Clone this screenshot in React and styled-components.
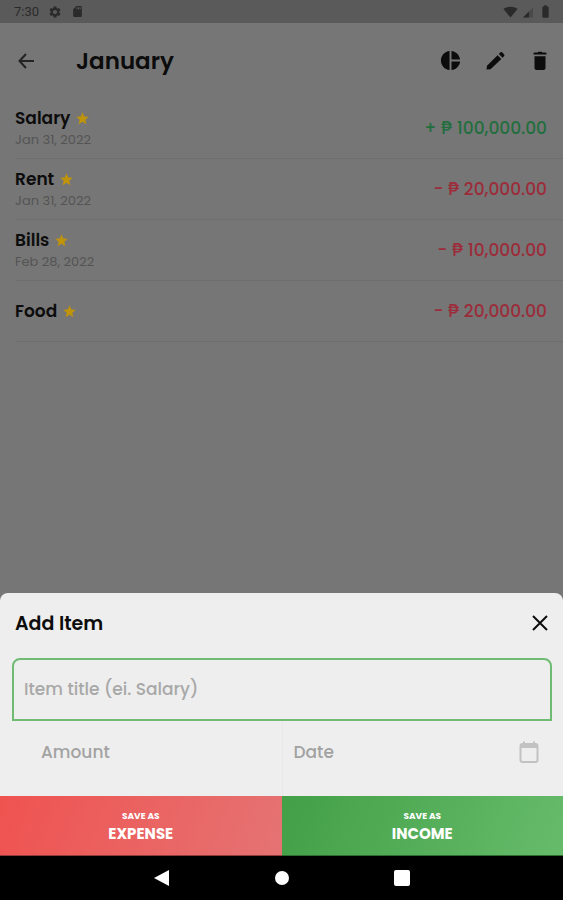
import React from "react";
import styled, { createGlobalStyle } from "styled-components";
import { MdBatteryFull, MdPieChart, MdSdCard, MdSettings, MdStar } from "react-icons/md";

const GlobalStyle = createGlobalStyle`
  * { box-sizing: border-box; }
  body { margin: 0; background: #767676; }
  button, input { font: inherit; color: inherit; }
`;

const Page = styled.div`
  display: flex;
  flex-direction: column;
  min-height: 100vh;
  background: #767676;
  color: #0c0c0c;
  font-family: Poppins, Inter, "Open Sans", sans-serif;
`;

const Screen = styled.main`
  flex: 1;
`;

const StatusBar = styled.div`
  display: flex;
  justify-content: space-between;
  height: 23px;
  padding: 0 10px 0 14px;
  background: #5a5a5a;
  color: #2a2a2a;
  font-family: Roboto, sans-serif;
  font-size: 13px;
`;

const StatusGroup = styled.div`
  display: flex;
  align-items: center;
  gap: ${(p) => p.$gap};
`;

const Header = styled.header`
  display: flex;
  align-items: center;
  gap: 36px;
  height: 75px;
  padding: 0 11px 0 12px;
`;

const Title = styled.h1`
  flex: 1;
  margin: 0;
  padding-left: 4px;
  font-size: 23px;
  font-weight: 600;
`;

const Actions = styled.div`
  display: flex;
  gap: 21px;
`;

const IconButton = styled.button`
  display: grid;
  place-items: center;
  width: 24px;
  height: 24px;
  padding: 0;
  border: 0;
  background: none;
  color: ${(p) => p.$color || "#0c0c0c"};
  cursor: pointer;
`;

const List = styled.ul`
  margin: 0;
  padding: 0 0 0 15px;
  list-style: none;
`;

const Row = styled.li`
  display: flex;
  align-items: center;
  justify-content: space-between;
  height: 61px;
  padding-right: 16px;
  border-bottom: 1px solid #6e6e6e;
`;

const Name = styled.div`
  display: flex;
  align-items: center;
  gap: 5px;
  font-size: 17px;
  line-height: 24px;
  font-weight: 600;
  color: #0c0c0c;

  svg { color: #bf930a; }
`;

const DateLine = styled.div`
  font-size: 13px;
  line-height: 20px;
  color: #545454;
`;

const Amount = styled.div`
  font-size: 17px;
  font-weight: 500;
  color: ${(p) => (p.$income ? "#226e3e" : "#9c2c3a")};
`;

const Sheet = styled.form`
  overflow: hidden;
  border-radius: 8px 8px 0 0;
  background: #eee;
`;

const SheetHeader = styled.div`
  display: flex;
  align-items: center;
  justify-content: space-between;
  height: 65px;
  padding: 0 11px 5px 15px;
`;

const SheetTitle = styled.h2`
  margin: 0;
  font-size: 19px;
  font-weight: 600;
`;

const TitleInput = styled.input`
  display: block;
  width: calc(100% - 23px);
  height: 63px;
  margin: 0 11px 0 12px;
  padding: 0 10px 2px;
  border: 2px solid #6fbb74;
  border-radius: 8px 8px 0 0;
  outline: 0;
  background: #eee;
  font-size: 17px;
  font-weight: 500;

  &::placeholder { color: #a8a8a8; opacity: 1; }
`;

const Halves = styled.div`
  display: grid;
  grid-template-columns: repeat(2, minmax(0, 1fr));
`;

const Field = styled.div`
  display: flex;
  align-items: center;
  height: 75px;
  padding: 0 22px 13px ${(p) => p.$indent};
  border-left: ${(p) => (p.$divided ? "1px solid #e8e8e8" : "0")};
`;

const FieldInput = styled.input`
  flex: 1;
  min-width: 0;
  padding: 0;
  border: 0;
  outline: 0;
  background: none;
  font-size: 17px;
  font-weight: 500;

  &::placeholder { color: #a2a2a2; opacity: 1; }
`;

const SaveButton = styled.button`
  display: flex;
  flex-direction: column;
  align-items: center;
  justify-content: center;
  height: 60px;
  padding: 0;
  border: 0;
  border-bottom: 1px solid ${(p) => (p.$income ? "#2d6e30" : "#913c3a")};
  background: ${(p) =>
    p.$income
      ? "linear-gradient(110deg, #43a047, #66bb6a)"
      : "linear-gradient(110deg, #ef5350, #e57373)"};
  color: #fff;
  font-size: 15px;
  line-height: 20px;
  font-weight: 700;
  cursor: pointer;

  small {
    font-size: 9px;
    line-height: 16px;
  }
`;

const NavBar = styled.nav`
  display: flex;
  align-items: center;
  justify-content: center;
  gap: 96px;
  height: 44px;
  background: #000;
`;

const items = [
  { name: "Salary", date: "Jan 31, 2022", amount: "+ ₱ 100,000.00", income: true },
  { name: "Rent", date: "Jan 31, 2022", amount: "- ₱ 20,000.00" },
  { name: "Bills", date: "Feb 28, 2022", amount: "- ₱ 10,000.00" },
  { name: "Food", amount: "- ₱ 20,000.00" },
];

const ArrowIcon = () => (
  <svg width="24" height="24" viewBox="0 0 24 24" fill="none" stroke="currentColor" strokeWidth="2">
    <path d="M14 5 7.500 12l6.500 7M7.500 12H22" />
  </svg>
);

const PencilIcon = () => (
  <svg width="24" height="24" viewBox="0 0 24 24" fill="currentColor">
    <path d="M3.500 20.500 4 16.800 14.600 6.200l3.700 3.700L7.600 20.200zM15.800 5l1.500-1.500c.6-.6 1.400-.6 2 0l1.700 1.700c.6.6.6 1.400 0 2l-1.500 1.500z" />
  </svg>
);

const TrashIcon = () => (
  <svg width="24" height="24" viewBox="0 0 24 24" fill="currentColor">
    <path d="M5.500 5.500v-1c0-.5.400-.9.900-.9H9.500l1-.8h3l1 .8h3.100c.5 0 .9.400.9.900v1zM6.500 7.200h11V19a2 2 0 0 1-2 2h-7a2 2 0 0 1-2-2z" />
  </svg>
);

const CloseIcon = () => (
  <svg width="24" height="24" viewBox="0 0 24 24" stroke="currentColor" strokeWidth="2">
    <path d="M5 5l14 14M19 5 5 19" />
  </svg>
);

const CalendarIcon = () => (
  <svg width="24" height="24" viewBox="0 0 24 24" fill="none" stroke="currentColor" strokeWidth="2">
    <rect x="3.500" y="4" width="17" height="18" rx="2" />
    <path d="M3 6h18" strokeWidth="4" />
    <path d="M7 1.500V5M17 1.500V5" />
  </svg>
);

const WifiIcon = () => (
  <svg width="15" height="12" viewBox="0 0 15 12" fill="currentColor">
    <path d="M7.500 11.500.500 3C4 0 11 0 14.500 3z" />
  </svg>
);

const SignalIcon = () => (
  <svg width="12" height="12" viewBox="0 0 12 12" fill="currentColor">
    <path d="M1 11.500 11 1.500v10z" opacity=".35" />
    <path d="M1 11.500 7 5.500v6z" />
  </svg>
);

export default function App() {
  return (
    <Page>
      <GlobalStyle />
      <Screen>
        <StatusBar>
          <StatusGroup $gap="9px">
            <span>7:30</span>
            <MdSettings size={14} />
            <MdSdCard size={13} />
          </StatusGroup>
          <StatusGroup $gap="4px">
            <WifiIcon />
            <SignalIcon />
            <MdBatteryFull size={15} />
          </StatusGroup>
        </StatusBar>
        <Header>
          <IconButton type="button" aria-label="Back" $color="#242424">
            <ArrowIcon />
          </IconButton>
          <Title>January</Title>
          <Actions>
            <IconButton type="button" aria-label="Chart">
              <MdPieChart size={23} />
            </IconButton>
            <IconButton type="button" aria-label="Edit">
              <PencilIcon />
            </IconButton>
            <IconButton type="button" aria-label="Delete">
              <TrashIcon />
            </IconButton>
          </Actions>
        </Header>
        <List>
          {items.map((item) => (
            <Row key={item.name}>
              <div>
                <Name>
                  {item.name}
                  <MdStar size={15} />
                </Name>
                {item.date && <DateLine>{item.date}</DateLine>}
              </div>
              <Amount $income={item.income}>{item.amount}</Amount>
            </Row>
          ))}
        </List>
      </Screen>
      <Sheet onSubmit={(e) => e.preventDefault()}>
        <SheetHeader>
          <SheetTitle>Add Item</SheetTitle>
          <IconButton type="button" aria-label="Close">
            <CloseIcon />
          </IconButton>
        </SheetHeader>
        <TitleInput aria-label="Item title" placeholder="Item title (ei. Salary)" />
        <Halves>
          <Field $indent="41px">
            <FieldInput aria-label="Amount" placeholder="Amount" />
          </Field>
          <Field $indent="11px" $divided>
            <FieldInput aria-label="Date" placeholder="Date" />
            <IconButton type="button" aria-label="Pick a date" $color="#c2c2c2">
              <CalendarIcon />
            </IconButton>
          </Field>
          <SaveButton type="submit">
            <small>SAVE AS</small>
            EXPENSE
          </SaveButton>
          <SaveButton type="submit" $income>
            <small>SAVE AS</small>
            INCOME
          </SaveButton>
        </Halves>
      </Sheet>
      <NavBar>
        <IconButton type="button" aria-label="Back" $color="#fff">
          <svg width="16" height="16" viewBox="0 0 16 16" fill="currentColor">
            <path d="M15 0v16L0 8z" />
          </svg>
        </IconButton>
        <IconButton type="button" aria-label="Home" $color="#fff">
          <svg width="16" height="16" viewBox="0 0 16 16" fill="currentColor">
            <circle cx="8" cy="8" r="7" />
          </svg>
        </IconButton>
        <IconButton type="button" aria-label="Recents" $color="#fff">
          <svg width="16" height="16" viewBox="0 0 16 16" fill="currentColor">
            <rect width="16" height="16" rx="2" />
          </svg>
        </IconButton>
      </NavBar>
    </Page>
  );
}
